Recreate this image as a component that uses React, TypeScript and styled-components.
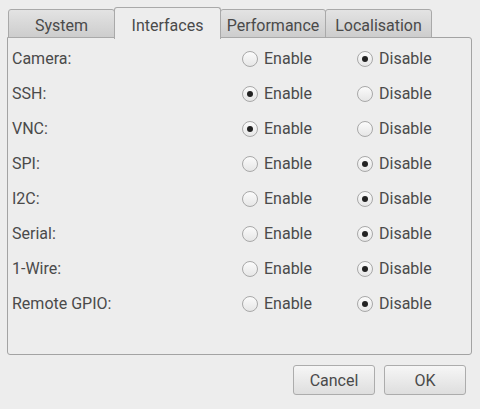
import styled, { createGlobalStyle } from "styled-components";

const GlobalStyle = createGlobalStyle`
    html, body {
        margin: 0;
        padding: 0;
        background: #ededed;
    }
    body {
        font-family: Roboto, "Liberation Sans", sans-serif;
        font-size: 16px;
        color: #4a4a4a;
    }
`;

const Dialog = styled.div`
    width: 480px;
    height: 409px;
    box-sizing: border-box;
    padding: 7px 8px 0 7px;
    display: flex;
    flex-direction: column;
`;

const TabBar = styled.div`
    display: flex;
    align-items: flex-end;
    height: 31px;
    padding-left: 1px;
    position: relative;
    z-index: 1;
`;

const Tab = styled.div<{ $active?: boolean; $width: number }>`
    width: ${p => p.$width}px;
    height: ${p => (p.$active ? 32 : 29)}px;
    box-sizing: border-box;
    display: flex;
    align-items: center;
    justify-content: center;
    border: 1px solid #a9a9a9;
    border-bottom: ${p => (p.$active ? "none" : "1px solid #a9a9a9")};
    border-radius: 3px 3px 0 0;
    margin-right: -1px;
    padding-top: 3px;
    background: ${p => (p.$active ? "#ededed" : "linear-gradient(#e3e3e3, #cdcdcd)")};
    color: #4a4a4a;
    font-size: 16px;
    margin-bottom: ${p => (p.$active ? -1 : 0)}px;
`;

const Panel = styled.div`
    height: 318px;
    box-sizing: border-box;
    border: 1px solid #a3a3a3;
    border-radius: 0 3px 3px 3px;
    margin-top: -1px;
    padding: 3px 0 0 4px;
    display: flex;
    flex-direction: column;
`;

const Row = styled.div`
    height: 35px;
    display: grid;
    grid-template-columns: 230px 115px 1fr;
    align-items: center;
`;

const Label = styled.span`
    color: #4a4a4a;
`;

const Option = styled.label`
    display: flex;
    align-items: center;
    gap: 6px;
`;

const Radio = styled.span<{ $checked?: boolean }>`
    width: 16px;
    height: 16px;
    box-sizing: border-box;
    border-radius: 50%;
    border: 1px solid #a8a8a8;
    background: linear-gradient(#fbfbfb, #e6e6e6);
    display: flex;
    align-items: center;
    justify-content: center;

    &::after {
        content: "";
        display: ${p => (p.$checked ? "block" : "none")};
        width: 6px;
        height: 6px;
        border-radius: 50%;
        background: #222;
    }
`;

const Footer = styled.div`
    display: flex;
    justify-content: flex-end;
    gap: 9px;
    padding: 10px 6px 0 0;
`;

const Button = styled.button`
    width: 82px;
    height: 30px;
    box-sizing: border-box;
    border: 1px solid #acacac;
    border-radius: 3px;
    background: linear-gradient(#f6f6f6, #dedede);
    font-family: Roboto, "Liberation Sans", sans-serif;
    font-size: 16px;
    color: #4a4a4a;
    padding: 0;
`;

const tabs = [
    { name: "System", width: 107 },
    { name: "Interfaces", width: 107 },
    { name: "Performance", width: 106 },
    { name: "Localisation", width: 107 },
];

const rows: [string, boolean][] = [
    ["Camera:", false],
    ["SSH:", true],
    ["VNC:", true],
    ["SPI:", false],
    ["I2C:", false],
    ["Serial:", false],
    ["1-Wire:", false],
    ["Remote GPIO:", false],
];

export default function App() {
    return (
        <>
            <GlobalStyle />
            <Dialog>
                <TabBar>
                    {tabs.map(t => (
                        <Tab key={t.name} $width={t.width} $active={t.name === "Interfaces"}>
                            {t.name}
                        </Tab>
                    ))}
                </TabBar>
                <Panel>
                    {rows.map(([label, enabled]) => (
                        <Row key={label}>
                            <Label>{label}</Label>
                            <Option>
                                <Radio $checked={enabled} />
                                Enable
                            </Option>
                            <Option>
                                <Radio $checked={!enabled} />
                                Disable
                            </Option>
                        </Row>
                    ))}
                </Panel>
                <Footer>
                    <Button>Cancel</Button>
                    <Button>OK</Button>
                </Footer>
            </Dialog>
        </>
    );
}
